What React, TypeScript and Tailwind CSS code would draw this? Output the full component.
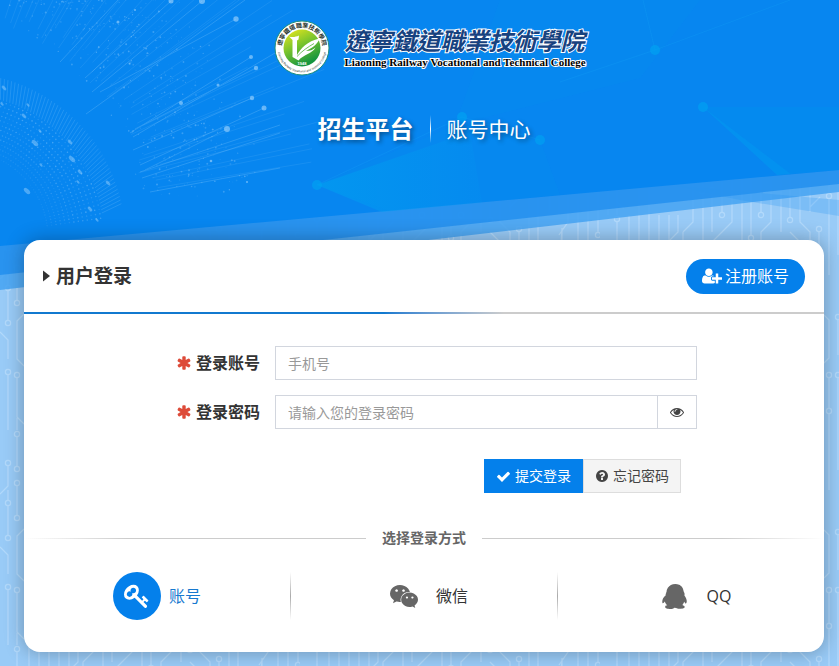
import React, { useState } from 'react';

interface IconProps {
  className?: string;
}

const ICONS = {
  asterisk:
    'M1546 1050q46 26 59.5 77.5t-12.5 97.500l-64 110q-26 46-77.500 59.500t-97.500-12.500l-266-153v307q0 52-38 90t-90 38h-128q-52 0-90-38t-38-90v-307l-266 153q-46 26-97.500 12.500t-77.500-59.500l-64-110q-26-46-12.500-97.500t59.500-77.500l266-154-266-154q-46-26-59.500-77.500t12.500-97.500l64-110q26-46 77.500-59.500t97.500 12.500l266 153v-307q0-52 38-90t90-38h128q52 0 90 38t38 90v307l266-153q46-26 97.500-12.500t77.500 59.500l64 110q26 46 12.500 97.500t-59.500 77.500l-266 154z',
  eye: 'M1664 960q-152-236-381-353 61 104 61 225 0 185-131.500 316.500t-316.500 131.500-316.500-131.500-131.500-316.500q0-121 61-225-229 117-381 353 133 205 333.500 326.500t434.500 121.500 434.500-121.500 333.500-326.500zm-720-384q0-20-14-34t-34-14q-125 0-214.500 89.500t-89.500 214.500q0 20 14 34t34 14 34-14 14-34q0-86 61-147t147-61q20 0 34-14t14-34zm848 384q0 34-20 69-140 230-376.500 368.500t-499.500 138.500-499.500-139-376.500-368q-20-35-20-69t20-69q140-229 376.500-368t499.500-139 499.500 139 376.500 368q20 35 20 69z',
  check:
    'M1671 566q0 40-28 68l-724 724-136 136q-28 28-68 28t-68-28l-136-136-362-362q-28-28-28-68t28-68l136-136q28-28 68-28t68 28l294 295 656-657q28-28 68-28t68 28l136 136q28 28 28 68z',
  question:
    'M1024 1376v-192q0-14-9-23t-23-9h-192q-14 0-23 9t-9 23v192q0 14 9 23t23 9h192q14 0 23-9t9-23zm256-672q0-88-55.500-163t-138.500-116-170-41q-243 0-371 213-15 24 8 42l132 100q7 6 19 6 16 0 25-12 53-68 86-92 34-24 86-24 48 0 85.500 26t37.500 59q0 38-20 61t-68 45q-63 28-115.500 86.500t-52.500 125.500v36q0 14 9 23t23 9h192q14 0 23-9t9-23q0-19 21.500-49.500t54.500-49.500q32-18 49-28.500t46-35 44.500-48 28-60.500 12.500-81zm384 192q0 209-103 385.500t-279.500 279.500-385.500 103-385.500-103-279.500-279.500-103-385.500 103-385.500 279.500-279.500 385.500-103 385.500 103 279.500 279.500 103 385.500z',
  userPlus:
    'M704 896q-159 0-271.500-112.500t-112.500-271.500 112.500-271.500 271.500-112.500 271.500 112.500 112.500 271.500-112.500 271.500-271.500 112.500zm960 128h352q13 0 22.500 9.500t9.500 22.500v192q0 13-9.500 22.500t-22.500 9.500h-352v352q0 13-9.500 22.500t-22.500 9.500h-192q-13 0-22.500-9.500t-9.500-22.500v-352h-352q-13 0-22.500-9.500t-9.500-22.500v-192q0-13 9.500-22.500t22.500-9.500h352v-352q0-13 9.500-22.500t22.500-9.500h192q13 0 22.500 9.500t9.500 22.500v352zm-736 224q0 52 38 90t90 38h256v238q-68 50-171 50h-874q-121 0-194-69t-73-190q0-53 3.500-103.500t14-109 26.500-108.500 43-97.500 62-81 85.500-53.500 111.500-20q19 0 39 17 79 61 154.500 91.500t164.500 30.500 164.500-30.500 154.500-91.500q20-17 39-17 132 0 217 96h-223q-52 0-90 38t-38 90v192z',
  key: 'M832 512q0-80-56-136t-136-56-136 56-56 136q0 42 19 83-41-19-83-19-80 0-136 56t-56 136 56 136 136 56 136-56 56-136q0-42-19-83 41 19 83 19 80 0 136-56t56-136zm851 704q0 17-49 66t-66 49q-9 0-28.500-16t-36.500-33-38.500-40-24.500-26l-96 96 220 220q28 28 28 68 0 42-39 81t-81 39q-40 0-68-28l-671-671q-176 131-365 131-163 0-265.500-102.500t-102.500-265.500q0-160 95-313t248-248 313-95q163 0 265.500 102.500t102.500 265.500q0 189-131 365l355 355 96-96q-3-3-26-24.500t-40-38.500-33-36.500-16-28.500q0-17 49-66t66-49q13 0 23 10 6 6 46 44.500t82 79.500 86.500 86 73 78 28.500 41z',
  wechat:
    'M580 461q0-41-25-66t-66-25q-43 0-76 25.500t-33 65.500q0 39 33 64.500t76 25.500q41 0 66-24.500t25-65.500zm743 507q0-28-25.500-50t-65.500-22q-27 0-49.500 22.500t-22.500 49.500q0 28 22.500 50.500t49.500 22.500q40 0 65.500-22t25.500-51zm-236-507q0-41-24.500-66t-65.500-25q-43 0-76 25.500t-33 65.500q0 39 33 64.500t76 25.500q41 0 65.500-24.500t24.500-65.500zm635 507q0-28-26-50t-65-22q-27 0-49.500 22.500t-22.500 49.500q0 28 22.500 50.500t49.500 22.500q39 0 65-22t26-51zm-266-397q-31-4-70-4-169 0-311 77t-223.500 208.500-81.500 287.500q0 78 23 152-35 3-68 3-26 0-50-1.500t-55-6.500-44.500-7-54.500-10.500-50-10.500l-253 127 72-218q-290-203-290-490 0-169 97.500-311t264-223.500 363.500-81.500q176 0 332.500 66t262 182.500 136.500 260.500zm592 561q0 117-68.500 223.500t-185.500 193.500l55 181-199-109q-150 37-218 37-169 0-311-70.500t-223.500-191.500-81.500-264 81.500-264 223.500-191.500 311-70.500q161 0 303 70.500t227.500 192 85.500 263.500z',
  qq: 'M270 806q-8-19-8-52 0-20 11-49t24-45q-1-22 7.500-53t22.500-43q0-139 92.500-288.500t217.500-209.500q139-66 324-66 133 0 266 55 49 21 90 48t71 56 55 68 42 74 32.500 84.500 25.500 89.500 22 98l1 5q55 83 55 150 0 14-9 40t-9 38q0 1 1.500 3.500t3.500 5 2 3.500q77 114 120.500 214.500t43.500 208.500q0 43-19.500 100t-55.500 57q-9 0-19.500-7.500t-19-17.500-19-26-16-26-13.500-26-9-17.500q-1-1-3-1l-5 4q-59 154-132 223 20 20 61.500 38.500t69 41.500 35.500 65q-2 4-4 16t-7 18q-64 97-302 97-53 0-110.500-9t-98-20-104.500-30q-15-5-23-7-14-4-46-4.500t-40-1.500q-41 45-127.500 65t-168.500 20q-35 0-69-1.500t-93-9-101-20.500-74.500-40-32.500-64q0-40 10-59.500t41-48.500q11-2 40.500-13t49.500-12q4 0 14-2 2-2 2-4l-2-3q-48-11-108-105.500t-73-156.500l-5-3q-4 0-12 20-18 41-54.500 74.500t-77.500 37.500h-1q-4 0-6-4.500t-5-5.500q-23-54-23-100 0-275 252-466z',
};

const Icon: React.FC<IconProps & { name: keyof typeof ICONS; wide?: boolean }> = ({ name, wide, className }) => (
  <svg viewBox={wide ? '0 0 2048 1792' : '0 0 1792 1792'} fill="currentColor" aria-hidden="true" className={className}>
    <path d={ICONS[name]} />
  </svg>
);

// Repeatable noise, so the particles land in the same place on every render
const noise = (n: number) => {
  const v = Math.sin(n * 127.1 + 11.7) * 43758.5453;
  return v - Math.floor(v);
};

const BURST = { x: -62, y: 224 };
const GLOBE = { x: -40, y: 238 };

const polar = (center: { x: number; y: number }, radius: number, degrees: number) => {
  const a = (degrees * Math.PI) / 180;
  return { x: center.x + radius * Math.cos(a), y: center.y - radius * Math.sin(a) };
};

const particles = Array.from({ length: 680 }, (_, i) => ({
  ...polar(BURST, 200 + (noise(i) + noise(i + 900)) * 66, 6 + noise(i + 2000) * 70),
  r: 0.3 + noise(i + 3000) * 0.7,
  opacity: 0.1 + noise(i + 4000) * 0.28,
}));

const rays = Array.from({ length: 38 }, (_, i) => {
  const angle = 8 + i * 1.7 + noise(i + 50) * 2;
  return { from: polar(BURST, 205 + noise(i) * 25, angle), to: polar(BURST, 340 + noise(i + 70) * 90, angle) };
});

const hatches = Array.from({ length: 50 }, (_, i) => {
  const angle = 12 + i * 1.3;
  return { from: polar(GLOBE, 144, angle - 2), to: polar(GLOBE, 165, angle) };
});

const globeDots = Array.from({ length: 38 * 13 }, (_, i) => ({
  ...polar(GLOBE, 88 + (i % 13) * 4.5, 8 + Math.floor(i / 13) * 1.8),
  opacity: (0.1 + noise(i + 77) * 0.25) * Math.min(1, 0.3 + (i % 13) / 10),
}));

const nodes = [
  [171, 1, 2.5], [202, 1, 3], [236, 19, 2.7], [251, 57, 2], [256, 68, 2.2], [218, 85, 1.5], [252, 98, 2.2],
  [264, 108, 2.5], [227, 129, 3], [181, 103, 2], [118, 22, 1.5], [135, 10, 1], [211, 161, 1.3], [247, 182, 1],
];

// Long rays that end in one of the bright nodes
const nodeRays =
  'M85 78L171 1M60 62L118 0M92 92L202 1M130 133L251 57M135 129L256 68M133 150L252 98M140 165L264 108M145 170L227 129' +
  'M100 92L236 19M133 137L280 50M140 172L280 125M142 178L280 133M150 192L280 168M86 114L245 0';

const flecks = [
  [35, 143, 4], [72, 159, 4], [27, 191, 4], [70, 142, 3], [24, 116, 3], [41, 165, 2], [80, 172, 3], [78, 182, 2],
  [108, 183, 3], [90, 209, 3], [28, 105, 2], [4, 88, 3], [2, 104, 2], [97, 220, 2], [40, 131, 2],
];

const circuitLines =
  'M8 111V60M0 117L8 125V144M8 160V241M8 36V56L0 64M8 76V105M24 99L17 106V144L24 151M17 163V202L24 209M17 7V36M17 56V85' +
  'M17 215V203M29 0V44M39 0V215M49 0V215M59 0V80M69 0V90M78 0V17L68 27M83 17V60M93 0V7L83 17M93 180V215M103 0V215M112 180V215M112 0V17' +
  'M122 160V212M132 180V215M132 0V7L112 27M142 0V215M151 180V215M151 0V20M161 180V212M171 180V215M171 0V7L161 17V40' +
  'M181 0V17M181 180V215M190 180V215M190 0V2M190 17L208 35M200 180V215M200 0V7L210 17V40M210 180V212M220 197L210 207' +
  'M219 17V60M229 198V215M229 0V60M224 100L229 105V143L224 148M229 163V193M238 105V140M238 163V215M238 0V40' +
  'M249 175V215L262 13V30M259 180V215M268 195V215M268 0V7L259 20M278 180V215M278 0V50M288 180V215M288 0V30M298 180V215M298 0V17';

const circuitPads = [
  [8, 108], [8, 157], [8, 33], [8, 73], [17, 88], [17, 160], [17, 4], [17, 39], [17, 53], [122, 0], [161, 0], [190, 5],
  [219, 14], [151, 23], [298, 20], [229, 160], [229, 196], [238, 102], [238, 160],
  [122, 215], [161, 215], [102, 191], [112, 190],
];

const Background: React.FC = () => (
  <svg
    viewBox="0 0 839 666"
    preserveAspectRatio="xMidYMin slice"
    aria-hidden="true"
    className="absolute inset-0 h-full w-full"
  >
    <defs>
      <pattern id="circuit" width="300" height="215" patternUnits="userSpaceOnUse">
        <path d={circuitLines} fill="none" stroke="#b2d9fb" strokeWidth="1.2" />
        {circuitPads.map(([x, y]) => (
          <circle key={`${x}-${y}`} cx={x} cy={y} r="2.6" fill="#99cbf7" stroke="#b2d9fb" strokeWidth="1.200" />
        ))}
      </pattern>
      <linearGradient id="glow" x1="0" x2="1">
        <stop offset="0" stopColor="#00a0f0" stopOpacity="0.6" />
        <stop offset="1" stopColor="#00a0f0" stopOpacity="0.1" />
      </linearGradient>
    </defs>

    <rect width="839" height="666" fill="#99cbf7" />
    <rect width="839" height="666" fill="url(#circuit)" />

    {/* slanted bands, lightest first */}
    <path d="M0 0H839V192L0 290Z" fill="#47a4f3" fillOpacity="0.88" />
    <path d="M670 185L839 200V216L740 200Z" fill="#2492f2" fillOpacity="0.25" />
    <path d="M0 0H839V184L0 275Z" fill="#2691ef" fillOpacity="0.92" />
    <path d="M0 0H839V170L0 246Z" fill="#0786f0" />

    <path d="M317 185L455 125L640 78L700 0H500L455 125L540 140L560 195L390 211Z" fill="#009bf0" opacity="0.12" />
    <path d="M317 185L470 132L482 203L382 212Z" fill="url(#glow)" />
    <path d="M703 107L791 174L777 175Z" fill="#00a0f0" opacity="0.45" />
    <path d="M703 107H839V170L791 174Z" fill="#0094f0" opacity="0.3" />
    <path d="M560 82L655 50L790 0M655 50L643 0M317 185L462 117L540 140" fill="none" stroke="#15a0f5" opacity="0.3" />
    <g fill="#00a5f3" opacity="0.6">
      <circle cx="655" cy="50" r="5" />
      <circle cx="703" cy="107" r="5" />
      <circle cx="540" cy="140" r="5" />
      <circle cx="462" cy="117" r="5" />
      <circle cx="317" cy="185" r="5" />
    </g>

    <g stroke="#8fd0ff" strokeWidth="0.8" opacity="0.15">
      {rays.map((ray, i) => (
        <line key={i} x1={ray.from.x} y1={ray.from.y} x2={ray.to.x} y2={ray.to.y} />
      ))}
    </g>
    <path d={nodeRays} stroke="#8fd0ff" strokeWidth="1" opacity="0.25" />
    <g stroke="#8fd0ff" strokeWidth="1" opacity="0.2">
      {hatches.map((line, i) => (
        <line key={i} x1={line.from.x} y1={line.from.y} x2={line.to.x} y2={line.to.y} />
      ))}
    </g>
    <g fill="#b5deff">
      {particles.map((p, i) => (
        <circle key={i} cx={p.x} cy={p.y} r={p.r} opacity={p.opacity} />
      ))}
      {globeDots.map((p, i) => (
        <circle key={i} cx={p.x} cy={p.y} r="0.8" opacity={p.opacity} />
      ))}
      {nodes.map(([x, y, r]) => (
        <circle key={`${x}-${y}`} cx={x} cy={y} r={r} opacity="0.55" />
      ))}
      {flecks.map(([x, y, r]) => (
        <ellipse key={`${x}-${y}`} cx={x} cy={y} rx={r} ry={r / 2} opacity="0.4" transform={`rotate(45 ${x} ${y})`} />
      ))}
    </g>
  </svg>
);

const Emblem: React.FC = () => (
  <svg viewBox="0 0 56 56" aria-hidden="true" className="h-14 w-14 shrink-0">
    <defs>
      <linearGradient id="leaf" x1="0" y1="0" x2="0.5" y2="1">
        <stop offset="0" stopColor="#f3ea1c" />
        <stop offset="0.5" stopColor="#7cc52c" />
        <stop offset="1" stopColor="#149440" />
      </linearGradient>
      <path id="ringTop" d="M8.100 33A20.500 20.500 0 1 1 47.900 33" />
      <path id="ringBottom" d="M4 24.200A24.300 24.300 0 1 0 52 24.200" />
    </defs>
    <circle cx="28" cy="28" r="27" fill="#fff" stroke="#1d8f7c" strokeWidth="1" />
    <circle cx="28" cy="28" r="18.500" fill="url(#leaf)" />
    <path
      d="M15 16.500C18 17.500 22 17 25 15.500L24.500 19.500L23 20.500V35C27 28 33 21.500 45.500 18.500C44 24 38 28 32 31C36 31 39 30 41.500 27.500C38 34 30 34 24.500 40.500L18.500 37V20Z"
      fill="#fff"
    />
    <path d="M23 36.500C28 31 34 27 40 23.500" fill="none" stroke="#4db038" strokeWidth="0.8" />
    <text x="28" y="45" textAnchor="middle" fontSize="4" fontWeight="700" fill="#fff" fontFamily="Liberation Sans, sans-serif">
      1948
    </text>
    <text fontSize="6" fontWeight="700" fill="#26332c" textAnchor="middle" fontFamily="'Noto Sans CJK TC', sans-serif">
      <textPath href="#ringTop" startOffset="50%">遼寧鐵道職業技術學院</textPath>
    </text>
    <text fontSize="3" fill="#26332c" textAnchor="middle" fontFamily="Liberation Sans, sans-serif">
      <textPath href="#ringBottom" startOffset="50%">Liaoning Railway Vocational and Technical College</textPath>
    </text>
  </svg>
);

const loginMethods = [
  { id: 'account', label: '账号' },
  { id: 'wechat', label: '微信' },
  { id: 'qq', label: 'QQ' },
];

const MethodIcon: React.FC<{ id: string }> = ({ id }) => {
  if (id === 'account') return <Icon name="key" className="h-[26px] w-[26px]" />;
  if (id === 'wechat') return <Icon name="wechat" wide className="h-[25px] w-7" />;
  return <Icon name="qq" className="h-[25px] w-[25px]" />;
};

const App: React.FC = () => {
  const [account, setAccount] = useState('');
  const [password, setPassword] = useState('');
  const [showPassword, setShowPassword] = useState(false);
  const [method, setMethod] = useState('account');

  return (
    <div className="relative min-h-screen overflow-hidden bg-[#99cbf7] pb-3.5 font-['Open_Sans','Noto_Sans_CJK_SC',sans-serif] text-[#333]">
      <Background />

      <div className="relative pr-[15px] pl-6">
        <header className="flex flex-col items-center pt-5 text-white">
          <div className="ml-3 flex items-center gap-3.5">
            <Emblem />
            <div className="whitespace-nowrap [paint-order:stroke_fill] [-webkit-text-stroke:2px_white]">
              <p className="font-['Noto_Sans_CJK_TC',sans-serif] text-2xl/7 font-bold text-[#17427f] italic">
                遼寧鐵道職業技術學院
              </p>
              <p className="font-['Liberation_Serif',serif] text-[11px]/4 font-bold text-black">
                Liaoning Railway Vocational and Technical College
              </p>
            </div>
          </div>

          <h1 className="mt-[35px] mb-[93px] flex items-center gap-4 [text-shadow:2px_2px_4px_rgba(0,0,0,0.4)]">
            <span className="text-2xl/9 font-bold">招生平台</span>
            <span className="h-7 w-px bg-gradient-to-b from-transparent via-white to-transparent" />
            <span className="text-[21px]/9 font-normal">账号中心</span>
          </h1>
        </header>

        <main className="mx-auto max-w-[800px] rounded-[16px] bg-white pb-8 shadow-[0_0_20px_rgba(0,0,0,0.3)]">
          <div className="flex h-[72px] items-center justify-between px-[19px]">
            <h2 className="flex items-center gap-1.5 text-[19px] font-bold">
              <svg viewBox="0 0 7 12" aria-hidden="true" className="h-3 w-[7px] fill-current">
                <path d="M0 0.500L7 6L0 11.500Z" />
              </svg>
              用户登录
            </h2>
            <button type="button" className="flex h-[35px] items-center gap-[3px] rounded-full bg-[#0480eb] px-4 text-base text-white">
              <Icon name="userPlus" wide className="h-[18px] w-5" />
              注册账号
            </button>
          </div>
          <div className="h-0.5 bg-gradient-to-r from-[#1179cf] from-45% to-[#ccc] to-60%" />

          <form className="mr-[127px] pt-8" onSubmit={(e) => e.preventDefault()}>
            <div className="flex items-center gap-[15px]">
              <label htmlFor="account" className="flex w-[236px] items-center justify-end gap-1 text-base font-bold">
                <Icon name="asterisk" className="h-4 w-4 text-[#dd4b39]" />
                登录账号
              </label>
              <input
                id="account"
                type="text"
                value={account}
                onChange={(e) => setAccount(e.target.value)}
                placeholder="手机号"
                className="h-[34px] min-w-0 flex-1 border border-[#d2d6de] bg-white px-3 text-sm placeholder:text-[#999]"
              />
            </div>

            <div className="mt-[15px] flex items-center gap-[15px]">
              <label htmlFor="password" className="flex w-[236px] items-center justify-end gap-1 text-base font-bold">
                <Icon name="asterisk" className="h-4 w-4 text-[#dd4b39]" />
                登录密码
              </label>
              <div className="flex min-w-0 flex-1">
                <input
                  id="password"
                  type={showPassword ? 'text' : 'password'}
                  value={password}
                  onChange={(e) => setPassword(e.target.value)}
                  placeholder="请输入您的登录密码"
                  className="h-[34px] min-w-0 flex-1 border border-[#d2d6de] bg-white px-3 text-sm placeholder:text-[#999]"
                />
                <button
                  type="button"
                  aria-label="显示密码"
                  onClick={() => setShowPassword(!showPassword)}
                  className="flex h-[34px] w-[39px] items-center justify-center border border-l-0 border-[#d2d6de] text-[#444]"
                >
                  <Icon name="eye" className="h-3.5 w-3.5" />
                </button>
              </div>
            </div>

            <div className="mt-[30px] mr-4 flex justify-end text-sm">
              <button type="submit" className="flex h-[34px] items-center gap-1 bg-[#0480eb] px-3 text-white">
                <Icon name="check" className="h-[15px] w-[15px]" />
                提交登录
              </button>
              <button type="button" className="flex h-[34px] items-center gap-1 border border-[#ddd] bg-[#f4f4f4] px-[11px] text-[#444]">
                <Icon name="question" className="h-3.5 w-3.5" />
                忘记密码
              </button>
            </div>
          </form>

          <div className="mt-[35px] flex items-center gap-4 text-sm font-bold text-[#666]">
            <span className="h-px flex-1 bg-gradient-to-r from-transparent to-[#ccc] to-30%" />
            选择登录方式
            <span className="h-px flex-1 bg-gradient-to-l from-transparent to-[#ccc] to-30%" />
          </div>

          <div className="mt-6 flex">
            {loginMethods.map((item, index) => (
              <React.Fragment key={item.id}>
                {index > 0 && <span className="h-12 w-px bg-gradient-to-b from-transparent via-[#aaa] to-transparent" />}
                <button
                  type="button"
                  onClick={() => setMethod(item.id)}
                  className={`flex flex-1 items-center justify-center gap-2 text-base ${method === item.id ? 'text-[#1779cf]' : 'text-[#333]'}`}
                >
                  <span
                    className={`flex h-12 w-12 items-center justify-center rounded-full ${method === item.id ? 'bg-[#0480eb] text-white' : 'text-[#666]'}`}
                  >
                    <MethodIcon id={item.id} />
                  </span>
                  {item.label}
                </button>
              </React.Fragment>
            ))}
          </div>
        </main>
      </div>
    </div>
  );
};

export default App;
